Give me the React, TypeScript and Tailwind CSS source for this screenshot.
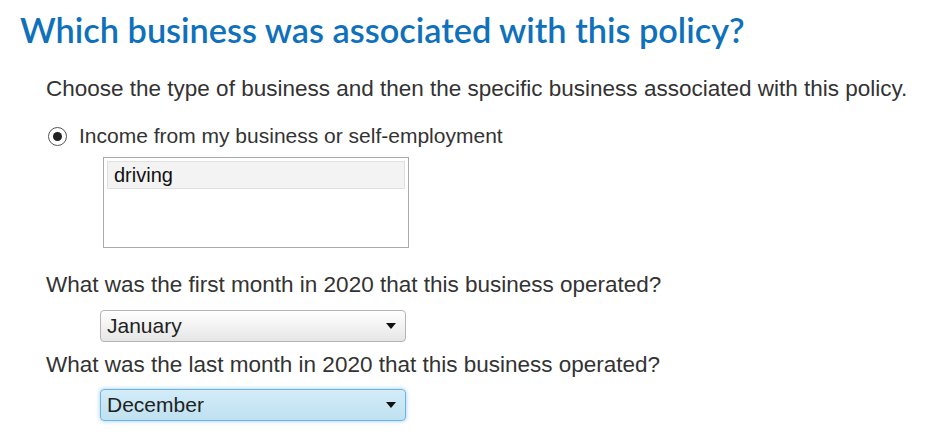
import React from "react";

function Caret() {
  return (
    <svg width="10" height="6" viewBox="0 0 10 6" className="block">
      <path d="M0 0 L10 0 L5 6 Z" fill="#111" />
    </svg>
  );
}

export default function App() {
  return (
    <div className="w-[934px] h-[436px] bg-white overflow-hidden" style={{ fontFamily: '"Liberation Sans", Arial, sans-serif' }}>
      <h1
        className="pl-[20px] pt-[10px] text-[34.3px] leading-[40px] font-semibold text-[#0f71bc]"
        style={{ fontFamily: 'Lato, "Noto Sans", sans-serif' }}
      >
        Which business was associated with this policy?
      </h1>
      <p className="pl-[46px] mt-[26px] text-[22.5px] leading-[26px] text-[#333]">
        Choose the type of business and then the specific business associated with this policy.
      </p>
      <div className="flex items-center pl-[48px] mt-[22px] gap-[12px] h-[24px]">
        <div className="w-[19px] h-[19px] rounded-full border border-[#555] flex items-center justify-center bg-white">
          <div className="w-[9px] h-[9px] rounded-full bg-[#222]" />
        </div>
        <span className="text-[21px] leading-[24px] text-[#333]">Income from my business or self-employment</span>
      </div>
      <div className="ml-[103px] mt-[9px] w-[306px] h-[91px] border border-[#aaa] p-[3px]">
        <div className="h-[28px] bg-[#f3f3f3] border border-[#e0e0e0] px-[6px] text-[20px] leading-[26px] text-[#111]">
          driving
        </div>
      </div>
      <p className="pl-[46px] mt-[24px] text-[22.5px] leading-[26px] text-[#333]">
        What was the first month in 2020 that this business operated?
      </p>
      <div className="ml-[100px] mt-[12px] w-[306px] h-[32px] rounded-[4px] border border-[#b5b5b5] bg-gradient-to-b from-white to-[#e6e6e6] flex items-center justify-between pl-[6px] pr-[9px]">
        <span className="text-[21px] leading-[24px] text-[#222]">January</span>
        <Caret />
      </div>
      <p className="pl-[46px] mt-[10px] text-[22.5px] leading-[26px] text-[#333]">
        What was the last month in 2020 that this business operated?
      </p>
      <div className="ml-[100px] mt-[11px] w-[306px] h-[32px] rounded-[4px] border border-[#6fb3e3] bg-gradient-to-b from-[#d3ecf8] to-[#bfe1f1] shadow-[0_0_4px_rgba(82,168,236,0.6)] flex items-center justify-between pl-[6px] pr-[9px]">
        <span className="text-[21px] leading-[24px] text-[#222]">December</span>
        <Caret />
      </div>
    </div>
  );
}
